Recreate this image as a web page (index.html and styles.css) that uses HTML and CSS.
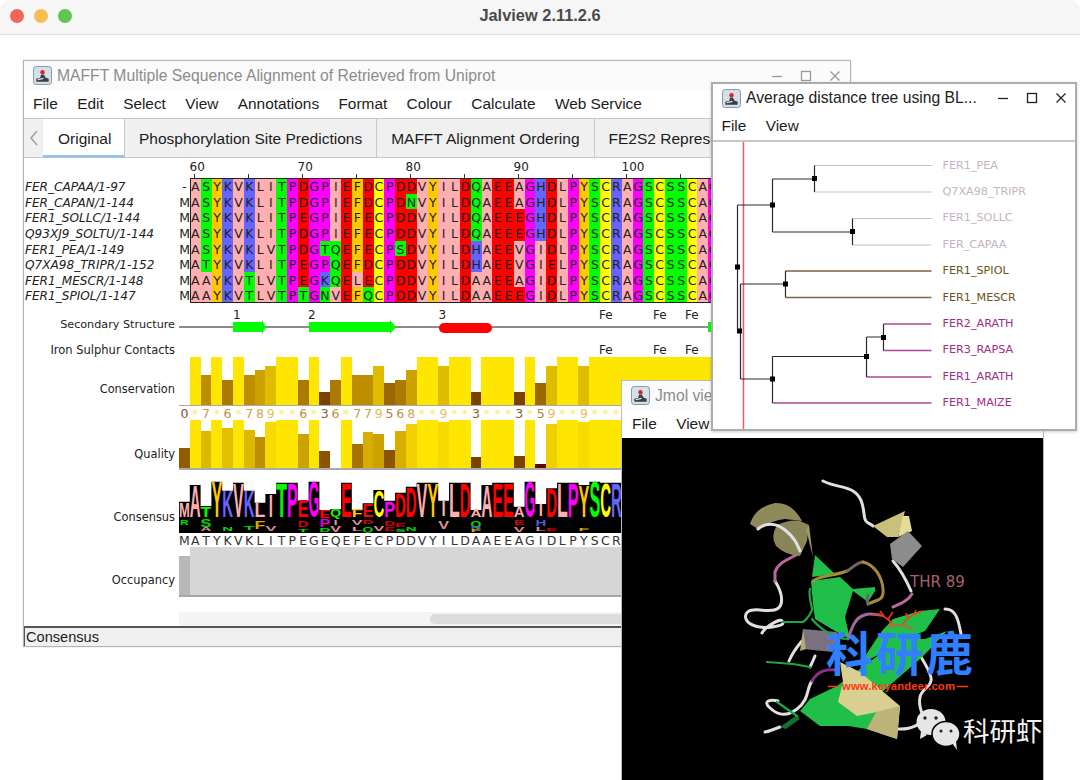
FILE: index.html
```html
<!DOCTYPE html>
<html lang="en">
<head>
<meta charset="utf-8">
<title>Jalview 2.11.2.6</title>
<link rel="stylesheet" href="styles.css">
</head>
<body>
<div class="app">
  <header class="mac-title">
    <div class="lights"><span class="light l-red"></span><span class="light l-amber"></span><span class="light l-green"></span></div>
    <div class="mac-name">Jalview 2.11.2.6</div>
  </header>
  <main class="desktop">

    <section class="win win-main">
      <div class="titlebar titlebar-main">
        <svg class="app-icon" viewBox="0 0 20 20"><rect x=".5" y=".5" width="19" height="19" rx="3" fill="#d5dfe8" stroke="#7f93a6"/><path d="M3.5 16.5h13v-3l-3.500-1.500-1.500-3h-3l-1 3.500-4 1z" fill="#3a3f46"/><path d="M5 14.500l6-1.500" stroke="#e8eef3" stroke-width="1.200"/><circle cx="10" cy="6.500" r="2.300" fill="#d9242c"/></svg>
        <span class="win-name dim">MAFFT Multiple Sequence Alignment of Retrieved from Uniprot</span>
        <div class="controls controls-dim">
          <svg viewBox="0 0 12 12"><path d="M1 6.500h10" /></svg>
          <svg viewBox="0 0 12 12"><rect x="1.500" y="1.500" width="9" height="9"/></svg>
          <svg viewBox="0 0 12 12"><path d="M1.500 1.500l9 9M10.500 1.500l-9 9"/></svg>
        </div>
      </div>
      <nav class="menubar menubar-main"><span>File</span><span>Edit</span><span>Select</span><span>View</span><span>Annotations</span><span>Format</span><span>Colour</span><span>Calculate</span><span>Web Service</span></nav>
      <div class="tabs">
        <div class="tab-scroll"><svg viewBox="0 0 10 16"><path d="M8 1L2 8l6 7"/></svg></div>
        <div class="tab tab-on">Original</div>
        <div class="tab">Phosphorylation Site Predictions</div>
        <div class="tab">MAFFT Alignment Ordering</div>
        <div class="tab">FE2S2 Representative Sequences</div>
      </div>

      <div class="row ruler-row">
        <svg class="ruler" viewBox="0 0 532 21">
          <text x="10.500" y="12.500">60</text><text x="118.500" y="12.500">70</text><text x="226.500" y="12.500">80</text><text x="334.500" y="12.500">90</text><text x="442.500" y="12.500">100</text>
          <path d="M15.500 16v5M69.500 16v5M123.500 16v5M177.500 16v5M231.500 16v5M285.500 16v5M339.500 16v5M393.500 16v5M447.500 16v5M501.500 16v5"/>
        </svg>
      </div>

      <div class="seqs">
        <div class="sel-box"></div>
        <div class="sr"><span class="id">FER_CAPAA/1-97</span><i>-</i><i class="A">A</i><i class="S">S</i><i class="Y">Y</i><i class="K">K</i><i class="V">V</i><i class="K">K</i><i class="L">L</i><i class="I">I</i><i class="T">T</i><i class="P">P</i><i class="D">D</i><i class="G">G</i><i class="P">P</i><i class="I">I</i><i class="E">E</i><i class="F">F</i><i class="D">D</i><i class="C">C</i><i class="P">P</i><i class="D">D</i><i class="D">D</i><i class="V">V</i><i class="Y">Y</i><i class="I">I</i><i class="L">L</i><i class="D">D</i><i class="Q">Q</i><i class="A">A</i><i class="E">E</i><i class="E">E</i><i class="A">A</i><i class="G">G</i><i class="H">H</i><i class="D">D</i><i class="L">L</i><i class="P">P</i><i class="Y">Y</i><i class="S">S</i><i class="C">C</i><i class="R">R</i><i class="A">A</i><i class="G">G</i><i class="S">S</i><i class="C">C</i><i class="S">S</i><i class="S">S</i><i class="C">C</i><i class="A">A</i><i class="G">G</i></div>
        <div class="sr"><span class="id">FER_CAPAN/1-144</span><i>M</i><i class="A">A</i><i class="S">S</i><i class="Y">Y</i><i class="K">K</i><i class="V">V</i><i class="K">K</i><i class="L">L</i><i class="I">I</i><i class="T">T</i><i class="P">P</i><i class="D">D</i><i class="G">G</i><i class="P">P</i><i class="I">I</i><i class="E">E</i><i class="F">F</i><i class="D">D</i><i class="C">C</i><i class="P">P</i><i class="D">D</i><i class="N">N</i><i class="V">V</i><i class="Y">Y</i><i class="I">I</i><i class="L">L</i><i class="D">D</i><i class="Q">Q</i><i class="A">A</i><i class="E">E</i><i class="E">E</i><i class="A">A</i><i class="G">G</i><i class="H">H</i><i class="D">D</i><i class="L">L</i><i class="P">P</i><i class="Y">Y</i><i class="S">S</i><i class="C">C</i><i class="R">R</i><i class="A">A</i><i class="G">G</i><i class="S">S</i><i class="C">C</i><i class="S">S</i><i class="S">S</i><i class="C">C</i><i class="A">A</i><i class="G">G</i></div>
        <div class="sr"><span class="id">FER1_SOLLC/1-144</span><i>M</i><i class="A">A</i><i class="S">S</i><i class="Y">Y</i><i class="K">K</i><i class="V">V</i><i class="K">K</i><i class="L">L</i><i class="I">I</i><i class="T">T</i><i class="P">P</i><i class="E">E</i><i class="G">G</i><i class="P">P</i><i class="I">I</i><i class="E">E</i><i class="F">F</i><i class="E">E</i><i class="C">C</i><i class="P">P</i><i class="D">D</i><i class="D">D</i><i class="V">V</i><i class="Y">Y</i><i class="I">I</i><i class="L">L</i><i class="D">D</i><i class="Q">Q</i><i class="A">A</i><i class="E">E</i><i class="E">E</i><i class="E">E</i><i class="G">G</i><i class="H">H</i><i class="D">D</i><i class="L">L</i><i class="P">P</i><i class="Y">Y</i><i class="S">S</i><i class="C">C</i><i class="R">R</i><i class="A">A</i><i class="G">G</i><i class="S">S</i><i class="C">C</i><i class="S">S</i><i class="S">S</i><i class="C">C</i><i class="A">A</i><i class="G">G</i></div>
        <div class="sr"><span class="id">Q93XJ9_SOLTU/1-144</span><i>M</i><i class="A">A</i><i class="S">S</i><i class="Y">Y</i><i class="K">K</i><i class="V">V</i><i class="K">K</i><i class="L">L</i><i class="I">I</i><i class="T">T</i><i class="P">P</i><i class="D">D</i><i class="G">G</i><i class="P">P</i><i class="I">I</i><i class="E">E</i><i class="F">F</i><i class="E">E</i><i class="C">C</i><i class="P">P</i><i class="D">D</i><i class="D">D</i><i class="V">V</i><i class="Y">Y</i><i class="I">I</i><i class="L">L</i><i class="D">D</i><i class="Q">Q</i><i class="A">A</i><i class="E">E</i><i class="E">E</i><i class="E">E</i><i class="G">G</i><i class="H">H</i><i class="D">D</i><i class="L">L</i><i class="P">P</i><i class="Y">Y</i><i class="S">S</i><i class="C">C</i><i class="R">R</i><i class="A">A</i><i class="G">G</i><i class="S">S</i><i class="C">C</i><i class="S">S</i><i class="S">S</i><i class="C">C</i><i class="A">A</i><i class="G">G</i></div>
        <div class="sr"><span class="id">FER1_PEA/1-149</span><i>M</i><i class="A">A</i><i class="S">S</i><i class="Y">Y</i><i class="K">K</i><i class="V">V</i><i class="K">K</i><i class="L">L</i><i class="V">V</i><i class="T">T</i><i class="P">P</i><i class="D">D</i><i class="G">G</i><i class="T">T</i><i class="Q">Q</i><i class="E">E</i><i class="F">F</i><i class="E">E</i><i class="C">C</i><i class="P">P</i><i class="S">S</i><i class="D">D</i><i class="V">V</i><i class="Y">Y</i><i class="I">I</i><i class="L">L</i><i class="D">D</i><i class="H">H</i><i class="A">A</i><i class="E">E</i><i class="E">E</i><i class="V">V</i><i class="G">G</i><i class="I">I</i><i class="D">D</i><i class="L">L</i><i class="P">P</i><i class="Y">Y</i><i class="S">S</i><i class="C">C</i><i class="R">R</i><i class="A">A</i><i class="G">G</i><i class="S">S</i><i class="C">C</i><i class="S">S</i><i class="S">S</i><i class="C">C</i><i class="A">A</i><i class="G">G</i></div>
        <div class="sr"><span class="id">Q7XA98_TRIPR/1-152</span><i>M</i><i class="A">A</i><i class="T">T</i><i class="Y">Y</i><i class="K">K</i><i class="V">V</i><i class="K">K</i><i class="L">L</i><i class="I">I</i><i class="T">T</i><i class="P">P</i><i class="E">E</i><i class="G">G</i><i class="P">P</i><i class="Q">Q</i><i class="E">E</i><i class="F">F</i><i class="D">D</i><i class="C">C</i><i class="P">P</i><i class="D">D</i><i class="D">D</i><i class="V">V</i><i class="Y">Y</i><i class="I">I</i><i class="L">L</i><i class="D">D</i><i class="H">H</i><i class="A">A</i><i class="E">E</i><i class="E">E</i><i class="V">V</i><i class="G">G</i><i class="I">I</i><i class="E">E</i><i class="L">L</i><i class="P">P</i><i class="Y">Y</i><i class="S">S</i><i class="C">C</i><i class="R">R</i><i class="A">A</i><i class="G">G</i><i class="S">S</i><i class="C">C</i><i class="S">S</i><i class="S">S</i><i class="C">C</i><i class="A">A</i><i class="G">G</i></div>
        <div class="sr"><span class="id">FER1_MESCR/1-148</span><i>M</i><i class="A">A</i><i class="A">A</i><i class="Y">Y</i><i class="K">K</i><i class="V">V</i><i class="T">T</i><i class="L">L</i><i class="V">V</i><i class="T">T</i><i class="P">P</i><i class="E">E</i><i class="G">G</i><i class="K">K</i><i class="Q">Q</i><i class="E">E</i><i class="L">L</i><i class="E">E</i><i class="C">C</i><i class="P">P</i><i class="D">D</i><i class="D">D</i><i class="V">V</i><i class="Y">Y</i><i class="I">I</i><i class="L">L</i><i class="D">D</i><i class="A">A</i><i class="A">A</i><i class="E">E</i><i class="E">E</i><i class="A">A</i><i class="G">G</i><i class="I">I</i><i class="D">D</i><i class="L">L</i><i class="P">P</i><i class="Y">Y</i><i class="S">S</i><i class="C">C</i><i class="R">R</i><i class="A">A</i><i class="G">G</i><i class="S">S</i><i class="C">C</i><i class="S">S</i><i class="S">S</i><i class="C">C</i><i class="A">A</i><i class="G">G</i></div>
        <div class="sr"><span class="id">FER1_SPIOL/1-147</span><i>M</i><i class="A">A</i><i class="A">A</i><i class="Y">Y</i><i class="K">K</i><i class="V">V</i><i class="T">T</i><i class="L">L</i><i class="V">V</i><i class="T">T</i><i class="P">P</i><i class="T">T</i><i class="G">G</i><i class="N">N</i><i class="V">V</i><i class="E">E</i><i class="F">F</i><i class="Q">Q</i><i class="C">C</i><i class="P">P</i><i class="D">D</i><i class="D">D</i><i class="V">V</i><i class="Y">Y</i><i class="I">I</i><i class="L">L</i><i class="D">D</i><i class="A">A</i><i class="A">A</i><i class="E">E</i><i class="E">E</i><i class="E">E</i><i class="G">G</i><i class="I">I</i><i class="D">D</i><i class="L">L</i><i class="P">P</i><i class="Y">Y</i><i class="S">S</i><i class="C">C</i><i class="R">R</i><i class="A">A</i><i class="G">G</i><i class="S">S</i><i class="C">C</i><i class="S">S</i><i class="S">S</i><i class="C">C</i><i class="A">A</i><i class="G">G</i></div>
      </div>

      <div class="row ss-row">
        <div class="lab lab-ss">Secondary Structure</div>
        <svg class="track" viewBox="0 0 532 34">
          <path class="ss-line" d="M0 24H532"/>
          <path class="ss-sheet" d="M54 19h29v-2l4 7-4 7v-2H54z"/>
          <path class="ss-sheet" d="M130 19h81v-2l6 7-6 7v-2h-81z"/>
          <rect class="ss-helix" x="260" y="20" width="53" height="10" rx="5"/>
          <rect class="ss-sheet" x="529" y="19" width="5" height="10"/>
          <text x="54" y="16">1</text><text x="129" y="16">2</text><text x="259.500" y="16">3</text>
          <text x="420" y="16">Fe</text><text x="474" y="16">Fe</text><text x="506" y="16">Fe</text>
        </svg>
      </div>
      <div class="row fe-row">
        <div class="lab lab-fe">Iron Sulphur Contacts</div>
        <svg class="track" viewBox="0 0 532 20"><text x="420" y="17">Fe</text><text x="474" y="17">Fe</text><text x="506" y="17">Fe</text></svg>
      </div>

      <div class="row cons-row">
        <div class="lab lab-cons">Conservation</div>
        <div class="cons-col">
          <div class="bars cons-bars"><b class="c0"></b><b class="cs"></b><b class="c7"></b><b class="cs"></b><b class="c6"></b><b class="cs"></b><b class="c7"></b><b class="c8"></b><b class="c9"></b><b class="cs"></b><b class="cs"></b><b class="c6"></b><b class="cs"></b><b class="c3"></b><b class="c6"></b><b class="cs"></b><b class="c7"></b><b class="c7"></b><b class="c9"></b><b class="c5"></b><b class="c6"></b><b class="c8"></b><b class="cs"></b><b class="cs"></b><b class="c9"></b><b class="cs"></b><b class="cs"></b><b class="c3"></b><b class="cs"></b><b class="cs"></b><b class="cs"></b><b class="c3"></b><b class="cs"></b><b class="c5"></b><b class="c9"></b><b class="cs"></b><b class="cs"></b><b class="c9"></b><b class="cs"></b><b class="cs"></b><b class="cs"></b><b class="cs"></b><b class="cs"></b><b class="cs"></b><b class="cs"></b><b class="cs"></b><b class="cs"></b><b class="cs"></b><b class="cs"></b><b class="cs"></b></div>
          <div class="digits"><i class="d0">0</i><i class="ds">*</i><i class="d7">7</i><i class="ds">*</i><i class="d6">6</i><i class="ds">*</i><i class="d7">7</i><i class="d8">8</i><i class="d9">9</i><i class="ds">*</i><i class="ds">*</i><i class="d6">6</i><i class="ds">*</i><i class="d3">3</i><i class="d6">6</i><i class="ds">*</i><i class="d7">7</i><i class="d7">7</i><i class="d9">9</i><i class="d5">5</i><i class="d6">6</i><i class="d8">8</i><i class="ds">*</i><i class="ds">*</i><i class="d9">9</i><i class="ds">*</i><i class="ds">*</i><i class="d3">3</i><i class="ds">*</i><i class="ds">*</i><i class="ds">*</i><i class="d3">3</i><i class="ds">*</i><i class="d5">5</i><i class="d9">9</i><i class="ds">*</i><i class="ds">*</i><i class="d9">9</i><i class="ds">*</i><i class="ds">*</i><i class="ds">*</i></div>
        </div>
      </div>

      <div class="row qual-row">
        <div class="lab lab-qual">Quality</div>
        <div class="bars qual-bars"><b style="height:20px;background:#8f5c00"></b><b style="height:48px;background:#ffe600"></b><b style="height:37px;background:#dcb800"></b><b style="height:48px;background:#ffe600"></b><b style="height:40px;background:#e2bf00"></b><b style="height:48px;background:#ffe600"></b><b style="height:38px;background:#dcb800"></b><b style="height:31px;background:#bd8f00"></b><b style="height:46px;background:#f6da00"></b><b style="height:48px;background:#ffe600"></b><b style="height:48px;background:#ffe600"></b><b style="height:34px;background:#cca200"></b><b style="height:48px;background:#ffe600"></b><b style="height:17px;background:#8a5400"></b><b style="height:0"></b><b style="height:48px;background:#ffe600"></b><b style="height:24px;background:#a87400"></b><b style="height:36px;background:#d6ae00"></b><b style="height:34px;background:#cca200"></b><b style="height:18px;background:#8a5400"></b><b style="height:37px;background:#d6ae00"></b><b style="height:44px;background:#f0d000"></b><b style="height:48px;background:#ffe600"></b><b style="height:48px;background:#ffe600"></b><b style="height:46px;background:#f6da00"></b><b style="height:48px;background:#ffe600"></b><b style="height:48px;background:#ffe600"></b><b style="height:11px;background:#7a4200"></b><b style="height:48px;background:#ffe600"></b><b style="height:48px;background:#ffe600"></b><b style="height:48px;background:#ffe600"></b><b style="height:12px;background:#7a4200"></b><b style="height:48px;background:#ffe600"></b><b style="height:4px;background:#5c0a00"></b><b style="height:44px;background:#f0d000"></b><b style="height:48px;background:#ffe600"></b><b style="height:48px;background:#ffe600"></b><b style="height:46px;background:#f6da00"></b><b style="height:48px;background:#ffe600"></b><b style="height:48px;background:#ffe600"></b><b style="height:48px;background:#ffe600"></b></div>
      </div>

      <div class="row logo-row">
        <div class="lab lab-logo">Consensus</div>
        <div class="logo-col">
          <svg class="logo" viewBox="0 0 443 63">
            <path fill="#000" d="M0 31.700h10.800V63H0zM10.800 15h10.800V63H10.800zM21.600 36h10.800V63H21.600zM32.400 11.700h10.800V63H32.400zM43.200 20.700h10.800V63H43.200zM54 12.700h10.800V63H54zM64.800 20.700h10.800V63H64.800zM75.600 32.700h10.800V63H75.600zM86.400 24h10.800V63H86.400zM97.200 12.700h10.800V63H97.200zM108 12.700h10.800V63H108zM118.800 30.700h10.800V63H118.800zM129.600 11.700h10.800V63H129.600zM140.400 40h10.800V63H140.400zM151.200 39.300h10.800V63H151.200zM162 12.700h10.800V63H162zM172.800 40h10.800V63H172.800zM183.600 33.300h10.800V63H183.600zM194.400 20h10.800V63H194.400zM205.200 30.700h10.800V63H205.200zM216 22.700h10.800V63H216zM226.800 16.700h10.800V63H226.800zM237.600 12.700h10.800V63H237.600zM248.400 12.700h10.800V63H248.400zM259.200 30.700h10.800V63H259.200zM270 12.700h10.800V63H270zM280.800 12.700h10.800V63H280.800zM291.600 40h10.800V63H291.600zM302.400 15h10.800V63H302.400zM313.200 12.700h10.800V63H313.200zM324 12.700h10.800V63H324zM334.800 36.700h10.800V63H334.800zM345.600 11.700h10.800V63H345.600zM356.400 34h10.800V63H356.400zM367.200 18.300h10.800V63H367.200zM378 12.700h10.800V63H378zM388.800 12.700h10.800V63H388.800zM399.600 15h10.800V63H399.600zM410.400 11.700h10.800V63H410.400zM421.200 12.700h10.800V63H421.200zM432 12.700h10.800V63H432z"/>
            <g>
              <text class="fp" transform="translate(0 46.700) scale(1.300 2.090)">M</text>
              <text class="fp" transform="translate(10.800 47.300) scale(1.500 4.520)">A</text>
              <text class="fg" transform="translate(21.600 46.700) scale(1.770 1.490)">T</text>
              <text class="fo" transform="translate(32.400 47.300) scale(1.620 4.980)">Y</text>
              <text class="fb" transform="translate(43.200 46.700) scale(1.500 3.630)">K</text>
              <text class="fp" transform="translate(54 47.300) scale(1.620 4.840)">V</text>
              <text class="fb" transform="translate(64.800 46.700) scale(1.500 3.630)">K</text>
              <text class="fp" transform="translate(75.600 46.700) scale(1.770 1.960)">L</text>
              <text class="fp" transform="translate(89.700 46.700) scale(1.500 3.170)">I</text>
              <text class="fg" transform="translate(97.200 47.300) scale(1.770 4.840)">T</text>
              <text class="fm" transform="translate(108 47.300) scale(1.620 4.840)">P</text>
              <text class="fr" transform="translate(118.800 47.300) scale(1.620 2.330)">E</text>
              <text class="fm" transform="translate(129.600 47.300) scale(1.390 4.980)">G</text>
              <text class="fr" transform="translate(140.400 48.300) scale(1.620 1.160)">E</text>
              <text class="fg" transform="translate(151.200 46.700) scale(1.390 1.020)">Q</text>
              <text class="fr" transform="translate(162 47.300) scale(1.620 4.840)">E</text>
              <text class="fo" transform="translate(172.800 47.300) scale(1.770 1.020)">F</text>
              <text class="fr" transform="translate(183.600 46.700) scale(1.620 1.860)">E</text>
              <text class="fy" transform="translate(194.400 46.700) scale(1.500 3.720)">C</text>
              <text class="fm" transform="translate(205.200 46.700) scale(1.620 2.230)">P</text>
              <text class="fr" transform="translate(216 46.700) scale(1.500 3.350)">D</text>
              <text class="fr" transform="translate(226.800 47.300) scale(1.500 4.280)">D</text>
              <text class="fp" transform="translate(237.600 47.300) scale(1.620 4.840)">V</text>
              <text class="fo" transform="translate(248.400 47.300) scale(1.620 4.840)">Y</text>
              <text class="fp" transform="translate(262.500 46) scale(1.500 2.140)">I</text>
              <text class="fp" transform="translate(270 47.300) scale(1.770 4.840)">L</text>
              <text class="fr" transform="translate(280.800 47.300) scale(1.500 4.840)">D</text>
              <text class="fp" transform="translate(291.600 47.300) scale(1.500 1.020)">A</text>
              <text class="fp" transform="translate(302.400 47.300) scale(1.500 4.520)">A</text>
              <text class="fr" transform="translate(313.200 47.300) scale(1.620 4.840)">E</text>
              <text class="fr" transform="translate(324 47.300) scale(1.620 4.840)">E</text>
              <text class="fp" transform="translate(334.800 46.700) scale(1.500 1.400)">A</text>
              <text class="fm" transform="translate(345.600 47.300) scale(1.390 4.980)">G</text>
              <text class="fp" transform="translate(359.700 46) scale(1.500 1.680)">I</text>
              <text class="fr" transform="translate(367.200 47.300) scale(1.500 4.050)">D</text>
              <text class="fp" transform="translate(378 47.300) scale(1.770 4.840)">L</text>
              <text class="fm" transform="translate(388.800 47.300) scale(1.620 4.840)">P</text>
              <text class="fo" transform="translate(399.600 47.300) scale(1.620 4.520)">Y</text>
              <text class="fg" transform="translate(410.400 47.300) scale(1.620 4.980)">S</text>
              <text class="fy" transform="translate(421.200 47.300) scale(1.500 4.840)">C</text>
              <text class="fb" transform="translate(432 47.300) scale(1.500 4.840)">R</text>
            </g>
            <g class="logo-minor">
              <text class="fg" transform="translate(1 55.300) scale(1.200 .650)">R</text>
              <text class="fg" transform="translate(21.600 56.700) scale(1.620 1.120)">S</text>
              <text class="fp" transform="translate(21.600 61) scale(1.500 .500)">A</text>
              <text class="fg" transform="translate(43.200 60.700) scale(1.500 .560)">N</text>
              <text class="fg" transform="translate(64.800 60) scale(1.770 .560)">T</text>
              <text class="fo" transform="translate(75.600 59.300) scale(1.770 1.070)">F</text>
              <text class="fp" transform="translate(86.400 60.700) scale(1.620 .790)">V</text>
              <text class="fr" transform="translate(118.800 57.300) scale(1.500 .930)">D</text>
              <text class="fg" transform="translate(118.800 62) scale(1.770 .370)">T</text>
              <text class="fm" transform="translate(140.400 56.700) scale(1.620 1.020)">P</text>
              <text class="fg" transform="translate(140.400 62) scale(1.500 .500)">D</text>
              <text class="fp" transform="translate(154.500 55) scale(1.500 .700)">I</text>
              <text class="fp" transform="translate(151.200 62) scale(1.620 .930)">V</text>
              <text class="fp" transform="translate(172.800 55.300) scale(1.620 .740)">V</text>
              <text class="fp" transform="translate(172.800 60.700) scale(1.770 .560)">L</text>
              <text class="fr" transform="translate(183.600 54.300) scale(1.500 .600)">D</text>
              <text class="fg" transform="translate(183.600 61.700) scale(1.390 .790)">Q</text>
              <text class="fp" transform="translate(194.400 60.700) scale(1.620 .650)">V</text>
              <text class="fr" transform="translate(205.200 55.700) scale(1.500 .650)">D</text>
              <text class="fr" transform="translate(205.200 61.300) scale(1.620 .560)">E</text>
              <text class="fr" transform="translate(216 57.300) scale(1.620 .560)">E</text>
              <text class="fg" transform="translate(216 62) scale(1.620 .370)">S</text>
              <text class="fg" transform="translate(226.800 60.700) scale(1.500 .470)">N</text>
              <text class="fp" transform="translate(259.200 59.300) scale(1.620 1.070)">V</text>
              <text class="fg" transform="translate(291.600 56.700) scale(1.390 .930)">Q</text>
              <text class="fb" transform="translate(291.600 59.300) scale(1.500 .280)">H</text>
              <text class="fo" transform="translate(291.600 62) scale(1.770 .280)">F</text>
              <text class="fr" transform="translate(334.800 55) scale(1.620 .790)">E</text>
              <text class="fp" transform="translate(334.800 61.700) scale(1.620 .700)">V</text>
              <text class="fb" transform="translate(356.400 56) scale(1.500 .930)">H</text>
              <text class="fp" transform="translate(356.400 60.700) scale(1.770 .470)">L</text>
              <text class="fr" transform="translate(367.200 60.700) scale(1.620 .330)">E</text>
              <text class="fo" transform="translate(399.600 60.700) scale(1.770 .330)">F</text>
            </g>
          </svg>
          <div class="digits consensus-letters"><i>M</i><i>A</i><i>T</i><i>Y</i><i>K</i><i>V</i><i>K</i><i>L</i><i>I</i><i>T</i><i>P</i><i>E</i><i>G</i><i>E</i><i>Q</i><i>E</i><i>F</i><i>E</i><i>C</i><i>P</i><i>D</i><i>D</i><i>V</i><i>Y</i><i>I</i><i>L</i><i>D</i><i>A</i><i>A</i><i>E</i><i>E</i><i>A</i><i>G</i><i>I</i><i>D</i><i>L</i><i>P</i><i>Y</i><i>S</i><i>C</i><i>R</i></div>
        </div>
      </div>

      <div class="row occ-row">
        <div class="lab lab-occ">Occupancy</div>
        <div class="occ"><span class="occ-first"></span><span class="occ-rest"></span></div>
      </div>

      <div class="row scroll-row">
        <div class="h-scroll"><span class="h-thumb"></span></div>
      </div>
      <div class="status">Consensus</div>
    </section>

    <section class="win win-jmol">
      <div class="titlebar titlebar-jmol">
        <svg class="app-icon" viewBox="0 0 20 20"><rect x=".5" y=".5" width="19" height="19" rx="3" fill="#d5dfe8" stroke="#7f93a6"/><path d="M3.5 16.5h13v-3l-3.500-1.500-1.500-3h-3l-1 3.500-4 1z" fill="#3a3f46"/><path d="M5 14.500l6-1.500" stroke="#e8eef3" stroke-width="1.200"/><circle cx="10" cy="6.500" r="2.300" fill="#d9242c"/></svg>
        <span class="win-name dim">Jmol view</span>
      </div>
      <nav class="menubar menubar-small"><span>File</span><span>View</span></nav>
      <svg class="jmol-view" viewBox="622 439 421 345">
        <rect x="622" y="439" width="421" height="345" fill="#000"/>
        <g class="coil c-white">
          <path d="M823 482C835 488 845 487 853 492S863 505 864 515 868 523 873 527"/>
          <path d="M775 582C780 590 783 598 781 605S772 612 760 611 744 614 746 620 760 630 772 628 784 625 782 622 765 628 762 634"/>
          <path d="M893 562C900 570 905 578 911 592"/>
          <path d="M945 610C955 610 958 618 961 635"/>
          <path d="M910 640C915 650 925 662 930 675S922 688 920 698 922 712 923 718 912 731 897 730"/>
          <path d="M802 642C795 650 792 655 789 662"/>
          <path d="M815 657C813 662 812 664 810 668"/>
          <path d="M812 682C806 690 810 700 797 710S775 714 769 708 770 700 778 702"/>
          <path d="M765 733C770 732 775 730 780 728"/>
        </g>
        <g class="coil">
          <path stroke="#b86a9e" d="M798 555C785 562 778 564 775 573L775 582"/>
          <path stroke="#b86a9e" d="M912 595C908 602 900 605 893 608"/>
          <path stroke="#8a2f8a" d="M837 671C825 670 818 672 812 682"/>
        </g>
        <path fill="#8f8a5c" d="M750 525Q755 508 775 504Q792 503 802 522L785 520Q770 522 758 530Z"/>
        <path fill="#8a8558" d="M777 526Q790 520 800 522L809 526L807 542L800 557Q785 556 776 547Q770 538 777 526Z"/>
        <path fill="#a09a60" d="M809 526L813 558L806 530Z"/>
        <path class="coil c-white" d="M758 530C765 524 775 523 785 531S797 545 800 552"/>
        <path fill="#c9c07c" d="M873 527L905 512L903 520L898 538L887 538Z"/>
        <path fill="#e4dc98" d="M903 517L909 517L912 532L898 538Z"/>
        <path fill="#8c8c8c" d="M890 545L908 532L922 547L903 568L892 560Z"/>
        <path fill="#1fbf4a" d="M815 556L835 575 812 578ZM811 582L840 578 853 590 875 588 875 592 868 603 853 592 845 618 850 640 835 632 815 620 813 605Z"/>
        <path fill="#1fbf4a" d="M940 610L920 612 893 620 882 632 875 642 860 665 880 655 905 640 925 632ZM947 632L930 650 920 660 897 680 880 695 878 712 867 730 848 727 820 727 800 712 810 700 837 687 860 670 880 655 905 640 925 640Z"/>
        <path fill="#146e2e" d="M780 728L797 716 800 720 786 730Z"/>
        <g class="coil">
          <path stroke="#a58a3a" d="M813 582C820 576 835 577 847 572"/>
          <path stroke="#6f6668" d="M847 572C852 570 855 564 863 563"/>
          <path stroke="#a58a3a" d="M863 563C875 566 882 578 883 590S878 600 868 605"/>
          <path stroke="#6f6668" d="M868 605C866 600 868 600 868 596"/>
          <path stroke="#9d6a9a" d="M848 640C852 628 855 620 862 617S872 615 880 616"/>
        </g>
        <path fill="#7a7080" d="M803 630L837 633 833 653 803 650Z"/>
        <path fill="#b3ab74" d="M803 630L806 650 800 652Z"/>
        <path fill="#d8cf90" d="M840 663L860 673 900 707 897 740 867 730 877 713 857 717 838 703 843 683Z"/>
        <path fill="#bdb47a" d="M876 713L900 707 897 740 867 730Z"/>
        <g class="coil c-green">
          <path d="M767 663L793 665 810 668"/>
          <path d="M782 623H803C808 620 812 612 812 610S808 595 810 590"/>
          <path d="M797 717L777 703"/>
          <path d="M812 620C820 630 835 640 848 640"/>
        </g>
        <text class="thr" x="910" y="588">THR 89</text>
        <g class="antler">
          <path d="M893 627C888 618 882 616 873 615M884 617L880 612M888 620L893 613M902 627C906 618 915 615 923 612M908 620L906 614M914 616L916 611"/>
        </g>
        <path stroke="#a8743a" stroke-width="2.500" fill="none" d="M888 628C895 625 905 625 913 631"/>
        <text class="wm-blue" x="826" y="672">科研鹿</text>
        <path class="wm-rule" d="M828 687.500H838M957 687.500H968"/>
        <text class="wm-url" x="842" y="691">www.keyandeer.com</text>
        <g class="wechat">
          <ellipse cx="931" cy="723" rx="14.500" ry="13"/><path d="M921 732l-1 8 7-4z"/>
          <ellipse cx="946" cy="735" rx="14" ry="12.500" stroke="#000" stroke-width="1.500"/><path d="M952 744l5 7-1-9z"/>
          <circle cx="925" cy="719" r="1.700" fill="#222"/><circle cx="936" cy="719" r="1.700" fill="#222"/>
          <circle cx="941" cy="732" r="1.500" fill="#222"/><circle cx="951" cy="732" r="1.500" fill="#222"/>
        </g>
        <text class="wm-white" x="963" y="742">科研虾</text>
      </svg>
    </section>

    <section class="win win-tree">
      <div class="titlebar titlebar-tree">
        <svg class="app-icon" viewBox="0 0 20 20"><rect x=".5" y=".5" width="19" height="19" rx="3" fill="#d5dfe8" stroke="#7f93a6"/><path d="M3.5 16.5h13v-3l-3.500-1.500-1.500-3h-3l-1 3.500-4 1z" fill="#3a3f46"/><path d="M5 14.500l6-1.500" stroke="#e8eef3" stroke-width="1.200"/><circle cx="10" cy="6.500" r="2.300" fill="#d9242c"/></svg>
        <span class="win-name">Average distance tree using BL...</span>
        <div class="controls">
          <svg viewBox="0 0 12 12"><path d="M1 6.500h10"/></svg>
          <svg viewBox="0 0 12 12"><rect x="1.500" y="1.500" width="9" height="9"/></svg>
          <svg viewBox="0 0 12 12"><path d="M1.500 1.500l9 9M10.500 1.500l-9 9"/></svg>
        </div>
      </div>
      <nav class="menubar menubar-small menubar-tree"><span>File</span><span>View</span></nav>
      <svg class="tree" viewBox="713 142 361 287">
        <path class="t-red" d="M743 142V429"/>
        <path class="t-pale" d="M814 165.500H931M814 192H931M852 218.500H931M852 245H931"/>
        <path class="t-brown" d="M785 271H931M785 297.500H931"/>
        <path class="t-purple" d="M883 324H931M883 350.500H931M866 377H931M772 403H931"/>
        <path class="t-black" d="M814 165.500V192M772 179H814M772 179V232M772 232H852M852 218.500V245M737 205H772M737 205V331M740 284H785M785 271V297.500M740 284V379M740 379H772M772 356.500V403M772 356.500H866M866 337V377M866 337H883M883 324V350.500"/>
        <path class="t-node" d="M811.500 176h5v5h-5zM769.500 202.500h5v5h-5zM849.500 229h5v5h-5zM734.500 264.500h5v5h-5zM782.500 281.500h5v5h-5zM736.500 328.500h5v5h-5zM769.500 376.500h5v5h-5zM863.500 354h5v5h-5zM880.500 335h5v5h-5z"/>
        <g class="t-lab lab-pale"><text x="942" y="168.500">FER1_PEA</text><text x="942" y="195">Q7XA98_TRIPR</text><text x="942" y="221">FER1_SOLLC</text><text x="942" y="247.500">FER_CAPAA</text></g>
        <g class="t-lab lab-brown"><text x="942" y="274">FER1_SPIOL</text><text x="942" y="300.500">FER1_MESCR</text></g>
        <g class="t-lab lab-purple"><text x="942" y="326.500">FER2_ARATH</text><text x="942" y="353">FER3_RAPSA</text><text x="942" y="379.500">FER1_ARATH</text><text x="942" y="405.500">FER1_MAIZE</text></g>
      </svg>
    </section>

  </main>
</div>
</body>
</html>
```
FILE: styles.css
```css
* { box-sizing: border-box; }
html, body { margin: 0; padding: 0; background: #fff; }
body { width: 1080px; height: 780px; overflow: hidden; font-family: "Liberation Sans", Arial, sans-serif; color: #1c1c1c; }
.app { display: flex; flex-direction: column; width: 1080px; height: 780px; }

/* macOS frame */
.mac-title { flex: 0 0 35px; display: flex; align-items: center; background: #f6f6f6; border-bottom: 1px solid #e3e3e3; border-radius: 10px 10px 0 0; padding: 0 0 3px 10px; }
.lights { display: flex; gap: 10px; }
.light { width: 14px; height: 14px; border-radius: 50%; }
.l-red { background: #f0665e; }
.l-amber { background: #f6bd50; }
.l-green { background: #61c554; }
.mac-name { flex: 1; text-align: center; font-size: 16.4px; font-weight: bold; color: #4a4a4a; padding-right: 72px; }

.desktop { flex: 1; position: relative; overflow: hidden; background: #fff; }

/* windows */
.win { position: absolute; display: flex; flex-direction: column; background: #fff; overflow: hidden; }
.win-main { left: 23px; top: 25px; width: 828px; height: 587px; border: 1px solid #b4b4b4; box-shadow: 0 0 2px rgba(0,0,0,.15); }
.win-jmol { left: 621px; top: 345px; width: 423px; height: 410px; border: 1px solid #bbb; border-bottom: 0; }
.win-tree { left: 711px; top: 47px; width: 366px; height: 349px; border: 2px solid #acacac; box-shadow: 0 1px 3px rgba(0,0,0,.2); }

.titlebar { display: flex; align-items: center; flex: none; }
.titlebar-main { height: 29px; background: #fbfbfb; padding: 0 9px 0 9px; }
.titlebar-jmol { height: 29px; background: #fbfbfb; padding: 0 0 0 9px; }
.titlebar-tree { height: 28px; background: #fff; padding: 0 8px 0 9px; }
.app-icon { width: 19px; height: 19px; flex: none; }
.win-name { font-size: 15.7px; margin-left: 5px; white-space: nowrap; flex: 1; color: #222; }
.dim { color: #8c8c8c; }
.controls { display: flex; gap: 17px; flex: none; }
.controls svg { width: 12px; height: 12px; fill: none; stroke: #222; stroke-width: 1.3; }
.controls-dim svg { stroke: #9a9a9a; }

.menubar { display: flex; gap: 19.400px; font-size: 15.4px; flex: none; align-items: center; background: #fff; white-space: nowrap; }
.menubar-main { height: 28px; padding-left: 9px; }
.menubar-small { height: 28px; padding-left: 10px; }
.menubar-tree { height: 30px; padding-left: 8.500px; border-bottom: 2px solid #c6c6c6; }

.tabs { display: flex; height: 40px; flex: none; background: #f0f0f0; border-top: 1px solid #c8c8c8; border-bottom: 1px solid #c8c8c8; font-size: 15.5px; white-space: nowrap; }
.tab-scroll { flex: none; width: 19px; display: flex; align-items: center; justify-content: center; padding-left: 1px; }
.tab-scroll svg { width: 10px; height: 16px; fill: none; stroke: #999; stroke-width: 1.3; }
.tab { flex: none; padding: 10.500px 14px 0; border-right: 1px solid #c8c8c8; }
.tab-on { width: 82px; padding-left: 15px; background: #fff; border-bottom: 3px solid #9cc1e4; height: 39px; }

/* alignment */
.row { display: flex; flex: none; }
.ruler-row { height: 20px; padding-left: 155px; }
.ruler { width: 532px; height: 21px; flex: none; font-family: "DejaVu Sans", sans-serif; font-size: 12px; }
.ruler path { stroke: #333; fill: none; }
.ruler text { fill: #222; }

.seqs { position: relative; height: 125px; flex: none; font-family: "DejaVu Sans", sans-serif; font-size: 12.5px; padding-top: .4px; white-space: nowrap; }
.sel-box { position: absolute; left: 166px; top: 0; width: 650px; height: 125px; border: 1px solid #222; border-right: 0; pointer-events: none; }
.sr { display: flex; height: 15.56px; line-height: 18px; color: #222; }
.id { flex: 0 0 155.2px; padding-left: 1px; font-style: italic; font-size: 12.1px; color: #222; }
.sr i { flex: 0 0 10.8px; height: 15.56px; text-align: center; font-style: normal; }
.A, .I, .L, .V, .M { background: #ffafaf; }
.F, .W, .Y { background: #ffc800; }
.H, .K, .R { background: #6464ff; }
.D, .E { background: #ff0000; }
.S, .T, .N, .Q { background: #00ff00; }
.G, .P { background: #ff00ff; }
.C { background: #ffff00; }

/* annotations */
.lab { flex: 0 0 155px; text-align: right; padding-right: 4px; font-family: "DejaVu Sans", sans-serif; font-size: 11.4px; color: #222; white-space: nowrap; }
.lab-ss { font-size: 11.2px; }
.lab-fe { font-size: 11.5px; }
.track { width: 532px; flex: none; font-family: "DejaVu Sans", sans-serif; font-size: 12px; }
.track text { fill: #222; }
.ss-row { height: 34px; }
.ss-row .track { height: 34px; }
.fe-row { height: 20px; }
.fe-row .track { height: 20px; }
.lab-ss { padding-top: 15px; }
.lab-fe { padding-top: 6px; }
.ss-line { stroke: #8c8c8c; stroke-width: 2; fill: none; }
.ss-sheet { fill: #00ff00; }
.ss-helix { fill: #ff0000; }

.cons-row { height: 63px; }
.lab-cons { padding-top: 25px; }
.cons-col { width: 540px; flex: none; }
.bars { display: flex; align-items: flex-end; flex: none; }
.bars b { flex: 0 0 10.8px; display: block; }
.cons-bars { height: 49px; border-bottom: 1px solid #aaa; }
.cs { height: 48px; background: #ffe600; }
.c9 { height: 38.7px; background: #e0bc00; }
.c8 { height: 35px; background: #cca200; }
.c7 { height: 30px; background: #bd8f00; }
.c6 { height: 25px; background: #ac7a00; }
.c5 { height: 22px; background: #9b6700; }
.c3 { height: 12.700px; background: #7a4200; }
.c0 { height: 0; }

.digits { display: flex; height: 14px; line-height: 15px; font-family: "DejaVu Sans", sans-serif; font-size: 12.5px; }
.digits i { flex: 0 0 10.8px; text-align: center; font-style: normal; }
.d0 { color: #8a4a4a; }
.d3 { color: #8b5a3a; }
.d5 { color: #b07e3e; }
.d6 { color: #be8c46; }
.d7 { color: #c9a050; }
.d8 { color: #cfa958; }
.d9 { color: #dfc05a; }
.ds { color: #ffe96a; }

.qual-row { height: 50px; }
.lab-qual { padding-top: 26.500px; }
.qual-bars { width: 532px; height: 50px; border-bottom: 2px solid #aaa; }

.logo-row { height: 77px; }
.lab-logo { padding-top: 39.500px; }
.logo-col { width: 443px; flex: none; }
.logo { display: block; width: 443px; height: 63px; }
.logo text { font-family: "Liberation Sans", sans-serif; font-weight: bold; font-size: 10px; }
.logo-minor { opacity: .85; }
.fp { fill: #ffafaf; }
.fo { fill: #ffc800; }
.fb { fill: #6464ff; }
.fr { fill: #ff0000; }
.fg { fill: #00ff00; }
.fm { fill: #ff00ff; }
.fy { fill: #ffff00; }
.consensus-letters { color: #333; }

.occ-row { height: 51px; }
.lab-occ { padding-top: 25.500px; }
.occ { display: flex; align-items: flex-end; width: 532px; height: 50px; border-bottom: 2px solid #a6a6a6; }
.occ-first { flex: 0 0 10.8px; height: 39px; background: #b8b8b8; }
.occ-rest { flex: 1; height: 48px; background: #d6d6d6; }

.scroll-row { height: 28px; padding: 14px 0 0 155px; }
.h-scroll { width: 532px; height: 14px; background: #f4f4f4; padding: 2px 0 2px 251px; }
.h-thumb { display: block; width: 281px; height: 10px; border-radius: 5px; background: #dcdcdc; }

.status { flex: none; height: 21px; border: 1px solid #555; border-top-width: 2px; background: #f0f0f0; font-size: 14.6px; line-height: 19px; padding-left: 1px; }

/* tree */
.tree { display: block; width: 362px; height: 287px; flex: none; }
.tree path { fill: none; }
.tree .t-node { fill: #000; }
.t-red { stroke: #f9565c; stroke-width: 1.5; }
.t-pale { stroke: #c9bcc9; stroke-width: 1.2; }
.t-brown { stroke: #7a6640; stroke-width: 1.3; }
.t-purple { stroke: #ab4a99; stroke-width: 1.3; }
.t-black { stroke: #2a2a2a; stroke-width: 1.2; }
.t-lab { font-family: "DejaVu Sans", sans-serif; font-size: 11.2px; }
.lab-pale { fill: #c4b4c4; }
.lab-brown { fill: #6b5320; }
.lab-purple { fill: #9b2e86; }

/* jmol */
.jmol-view { display: block; width: 421px; height: 345px; flex: none; }
.coil { fill: none; stroke-width: 3; stroke-linecap: round; }
.c-white { stroke: #e0e0e0; }
.c-green { stroke: #1fa544; stroke-width: 2.2; }
.thr { font-family: "DejaVu Sans", sans-serif; font-size: 15px; fill: #a8626f; }
.antler path { fill: none; stroke: #ff3a10; stroke-width: 1.5; }
.wm-blue { font-family: "Noto Sans CJK SC", sans-serif; font-weight: bold; font-size: 47px; letter-spacing: 3px; fill: #2f7fff; }
.wm-url { font-family: "Liberation Sans", sans-serif; font-weight: bold; font-size: 11.2px; letter-spacing: .2px; fill: #ff3a10; }
.wm-rule { stroke: #ff3a10; stroke-width: 1.3; fill: none; }
.wechat { fill: #e6e6e6; }
.wm-white { font-family: "Noto Sans CJK SC", sans-serif; font-size: 26.500px; fill: #f2f2f2; }
```
